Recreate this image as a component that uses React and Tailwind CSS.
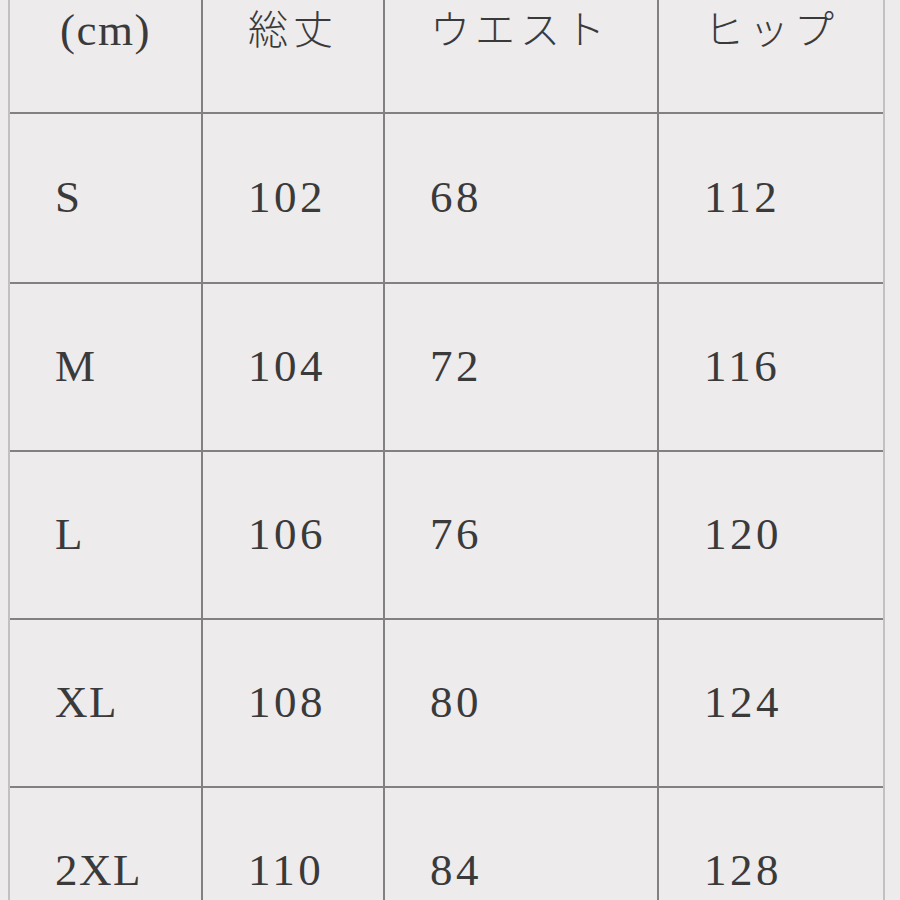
const columns = ["(cm)", "総丈", "ウエスト", "ヒップ"];

const sizes = [
  ["S", "102", "68", "112"],
  ["M", "104", "72", "116"],
  ["L", "106", "76", "120"],
  ["XL", "108", "80", "124"],
  ["2XL", "110", "84", "128"]
];

const colWidths = ["w-[193px]", "w-[182px]", "w-[274px]", "w-[224px]"];

function Cell({ index, className = "", children }) {
  const isLast = index === colWidths.length - 1;

  return (
    <div
      className={`${colWidths[index]} flex h-full items-center ${
        isLast ? "" : "border-r-2 border-[#828182]"
      } ${className}`}
    >
      {children}
    </div>
  );
}

export default function App() {
  return (
    <div
      className="h-[900px] w-[900px] overflow-hidden bg-[#edebec] text-[#3b3a3b]"
      style={{
        fontFamily:
          '"Liberation Serif", "Noto Sans CJK JP", serif'
      }}
    >
      <div className="-mt-[56px] ml-[8px] w-[877px] border-x-2 border-[#c2c0c1]">
        {/* header row, top is cut off by the page edge */}
        <div className="flex h-[168px]">
          {columns.map((label, i) => (
            <Cell
              key={label}
              index={i}
              className={
                i === 0
                  ? "pl-[50px] pt-[6px] text-[45px] tracking-[1.5px]"
                  : "pl-[45px] pt-[6px] text-[40px] font-light tracking-[5px]"
              }
            >
              {label}
            </Cell>
          ))}
        </div>

        {sizes.map((row, r) => (
          <div
            key={row[0]}
            className={`flex border-t-2 border-[#828182] ${
              r === 0 ? "h-[170px]" : "h-[168px]"
            }`}
          >
            {row.map((value, i) => (
              <Cell
                key={i}
                index={i}
                className={
                  i === 0
                    ? "pl-[45px] text-[45px] tracking-[1.5px]"
                    : "pl-[45px] text-[45px] tracking-[3.5px]"
                }
              >
                {value}
              </Cell>
            ))}
          </div>
        ))}
      </div>
    </div>
  );
}
